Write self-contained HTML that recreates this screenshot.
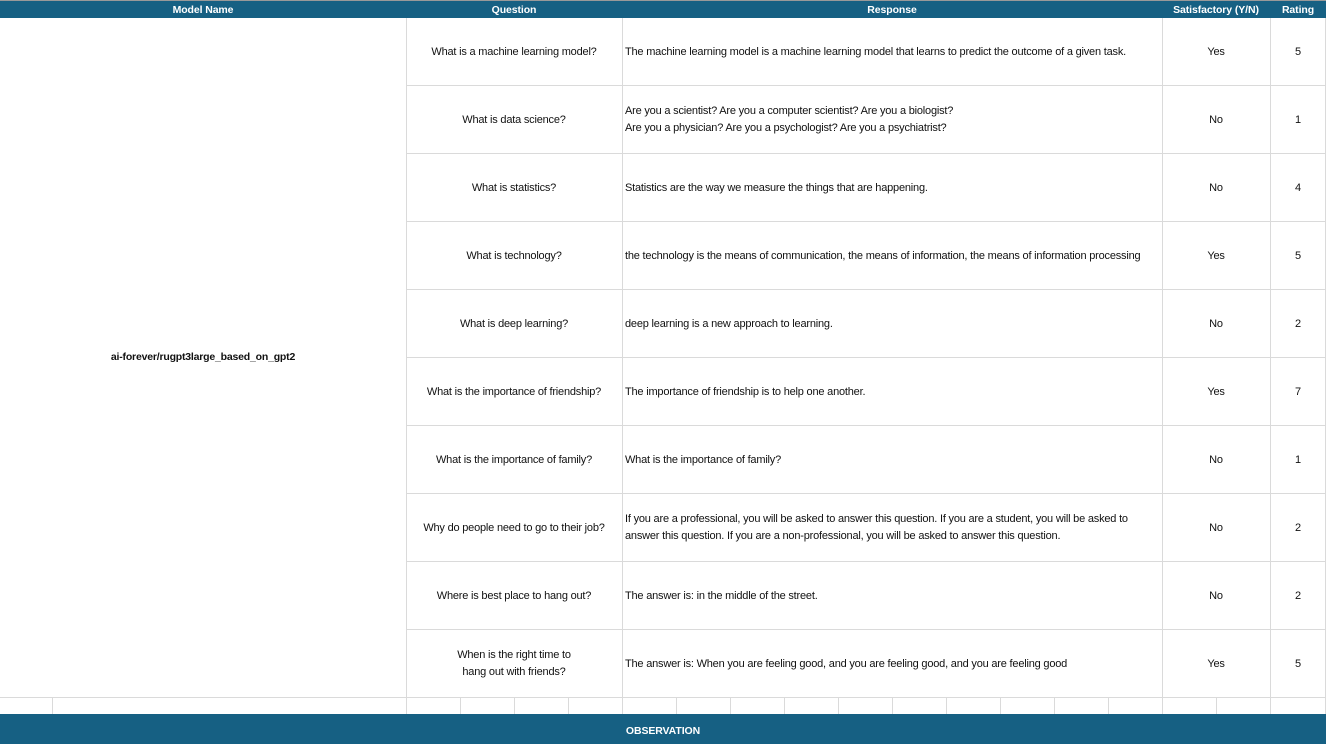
<!DOCTYPE html>
<html><head><meta charset="utf-8"><style>
body{margin:0;width:1326px;height:744px;overflow:hidden;background:#fff;position:relative;font-family:"Liberation Sans",sans-serif;color:#111;}
.a{position:absolute;box-sizing:border-box;}
.hd{top:1px;height:17px;background:#166083;left:0;width:1326px;}
.ht{position:absolute;top:2px;height:17px;line-height:17px;color:#fff;font-weight:bold;font-size:10.5px;text-align:center;letter-spacing:-0.1px}
.v{position:absolute;width:1px;background:#dadada;}
.h{position:absolute;height:1px;background:#dadada;}
.c{position:absolute;font-size:11px;letter-spacing:-0.2px;display:flex;align-items:center;line-height:17px;padding-top:2px;box-sizing:border-box}
.q{left:406px;width:216px;justify-content:center;text-align:center}
.r{left:625px;width:537px;}
.s{left:1162px;width:108px;justify-content:center}
.n{left:1270px;width:56px;justify-content:center}
</style></head><body>
<div class="a" style="top:0;left:0;width:1326px;height:1px;background:#999"></div>
<div class="a hd"></div>
<div class="ht" style="left:0;width:406px">Model Name</div>
<div class="ht" style="left:406px;width:216px">Question</div>
<div class="ht" style="left:622px;width:540px">Response</div>
<div class="ht" style="left:1162px;width:108px">Satisfactory (Y/N)</div>
<div class="ht" style="left:1270px;width:56px">Rating</div>
<div class="v" style="left:406px;top:18px;height:696px"></div>
<div class="v" style="left:622px;top:18px;height:696px"></div>
<div class="v" style="left:1162px;top:18px;height:696px"></div>
<div class="v" style="left:1270px;top:18px;height:696px"></div>
<div class="v" style="left:1325px;top:18px;height:696px"></div>
<div class="v" style="left:52px;top:697px;height:17px"></div>
<div class="h" style="left:406px;width:920px;top:85px"></div>
<div class="h" style="left:406px;width:920px;top:153px"></div>
<div class="h" style="left:406px;width:920px;top:221px"></div>
<div class="h" style="left:406px;width:920px;top:289px"></div>
<div class="h" style="left:406px;width:920px;top:357px"></div>
<div class="h" style="left:406px;width:920px;top:425px"></div>
<div class="h" style="left:406px;width:920px;top:493px"></div>
<div class="h" style="left:406px;width:920px;top:561px"></div>
<div class="h" style="left:406px;width:920px;top:629px"></div>
<div class="h" style="left:0;width:1326px;top:697px"></div>
<div class="v" style="left:460px;top:697px;height:17px"></div><div class="v" style="left:514px;top:697px;height:17px"></div><div class="v" style="left:568px;top:697px;height:17px"></div><div class="v" style="left:676px;top:697px;height:17px"></div><div class="v" style="left:730px;top:697px;height:17px"></div><div class="v" style="left:784px;top:697px;height:17px"></div><div class="v" style="left:838px;top:697px;height:17px"></div><div class="v" style="left:892px;top:697px;height:17px"></div><div class="v" style="left:946px;top:697px;height:17px"></div><div class="v" style="left:1000px;top:697px;height:17px"></div><div class="v" style="left:1054px;top:697px;height:17px"></div><div class="v" style="left:1108px;top:697px;height:17px"></div><div class="v" style="left:1216px;top:697px;height:17px"></div>
<div class="c" style="left:0;width:406px;top:348px;height:17px;justify-content:center;font-weight:bold;font-size:10.5px">ai-forever/rugpt3large_based_on_gpt2</div>

<div class="c q" style="top:18px;height:67px">What is a machine learning model?</div>
<div class="c r" style="top:18px;height:67px">The machine learning model is a machine learning model that learns to predict the outcome of a given task.</div>
<div class="c s" style="top:18px;height:67px">Yes</div><div class="c n" style="top:18px;height:67px">5</div>

<div class="c q" style="top:85px;height:68px">What is data science?</div>
<div class="c r" style="top:85px;height:68px">Are you a scientist? Are you a computer scientist? Are you a biologist?<br>Are you a physician? Are you a psychologist? Are you a psychiatrist?</div>
<div class="c s" style="top:85px;height:68px">No</div><div class="c n" style="top:85px;height:68px">1</div>

<div class="c q" style="top:153px;height:68px">What is statistics?</div>
<div class="c r" style="top:153px;height:68px">Statistics are the way we measure the things that are happening.</div>
<div class="c s" style="top:153px;height:68px">No</div><div class="c n" style="top:153px;height:68px">4</div>

<div class="c q" style="top:221px;height:68px">What is technology?</div>
<div class="c r" style="top:221px;height:68px">the technology is the means of communication, the means of information, the means of information processing</div>
<div class="c s" style="top:221px;height:68px">Yes</div><div class="c n" style="top:221px;height:68px">5</div>

<div class="c q" style="top:289px;height:68px">What is deep learning?</div>
<div class="c r" style="top:289px;height:68px">deep learning is a new approach to learning.</div>
<div class="c s" style="top:289px;height:68px">No</div><div class="c n" style="top:289px;height:68px">2</div>

<div class="c q" style="top:357px;height:68px">What is the importance of friendship?</div>
<div class="c r" style="top:357px;height:68px">The importance of friendship is to help one another.</div>
<div class="c s" style="top:357px;height:68px">Yes</div><div class="c n" style="top:357px;height:68px">7</div>

<div class="c q" style="top:425px;height:68px">What is the importance of family?</div>
<div class="c r" style="top:425px;height:68px">What is the importance of family?</div>
<div class="c s" style="top:425px;height:68px">No</div><div class="c n" style="top:425px;height:68px">1</div>

<div class="c q" style="top:493px;height:68px">Why do people need to go to their job?</div>
<div class="c r" style="top:493px;height:68px">If you are a professional, you will be asked to answer this question. If you are a student, you will be asked to<br>answer this question. If you are a non-professional, you will be asked to answer this question.</div>
<div class="c s" style="top:493px;height:68px">No</div><div class="c n" style="top:493px;height:68px">2</div>

<div class="c q" style="top:561px;height:68px">Where is best place to hang out?</div>
<div class="c r" style="top:561px;height:68px">The answer is: in the middle of the street.</div>
<div class="c s" style="top:561px;height:68px">No</div><div class="c n" style="top:561px;height:68px">2</div>

<div class="c q" style="top:629px;height:68px">When is the right time to<br>hang out with friends?</div>
<div class="c r" style="top:629px;height:68px">The answer is: When you are feeling good, and you are feeling good, and you are feeling good</div>
<div class="c s" style="top:629px;height:68px">Yes</div><div class="c n" style="top:629px;height:68px">5</div>

<div class="a" style="top:714px;left:0;width:1326px;height:30px;background:#166083;color:#fff;font-weight:bold;font-size:10.5px;text-align:center;line-height:34px;letter-spacing:-0.1px">OBSERVATION</div>
</body></html>
